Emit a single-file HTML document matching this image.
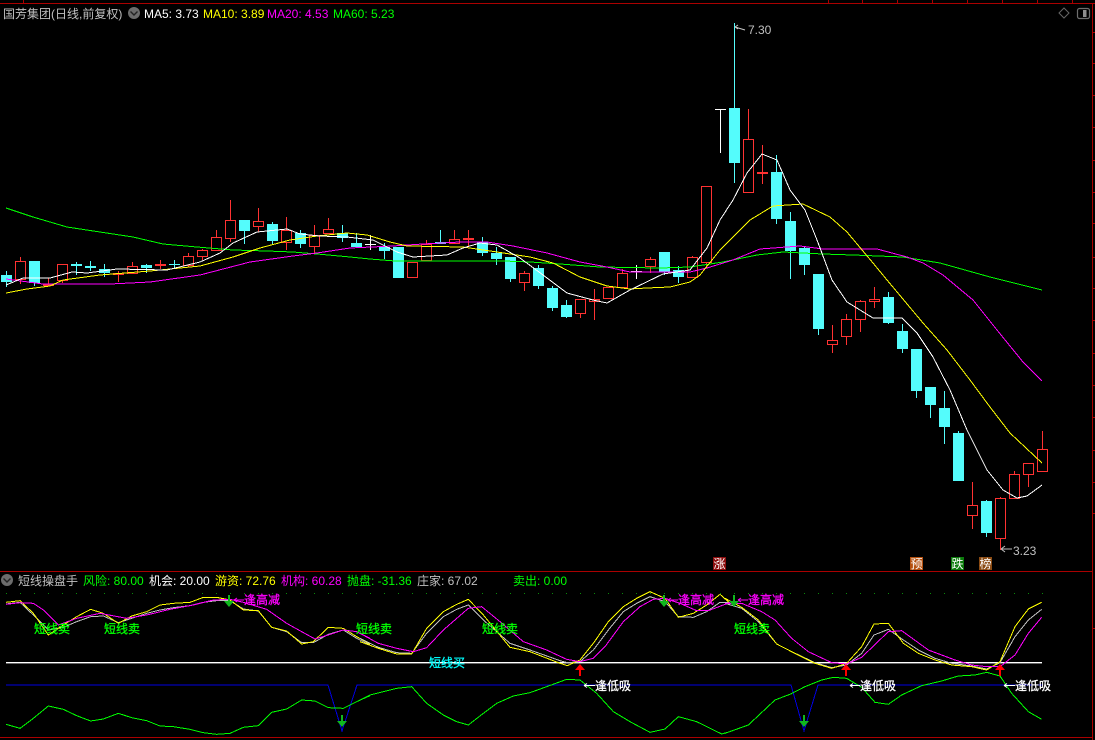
<!DOCTYPE html>
<html lang="zh">
<head>
<meta charset="utf-8">
<title>K线图</title>
<style>
html,body{margin:0;padding:0;background:#000;width:1095px;height:740px;overflow:hidden}
svg{display:block;position:absolute;left:0;top:0}
text{font-family:"Liberation Sans","WenQuanYi Zen Hei","Noto Sans CJK SC",sans-serif;font-size:12px}
.l{fill:none;stroke-width:1;vector-effect:non-scaling-stroke;shape-rendering:crispEdges}
.b{stroke-width:.3}
</style>
</head>
<body>
<svg width="1095" height="740" viewBox="0 0 1095 740" xmlns="http://www.w3.org/2000/svg">
<rect width="1095" height="740" fill="#000"/>
<!-- frame -->
<g shape-rendering="crispEdges" fill="#aa0000">
<rect x="0" y="3" width="1095" height="1"/>
<rect x="1092" y="3" width="1" height="737"/>
<rect x="0" y="571" width="1092" height="1"/>
<rect x="0" y="737" width="1092" height="1"/>
</g>
<g shape-rendering="crispEdges" stroke="#aa0000" stroke-width="1" fill="none">
<path d="M23.5 0V3M828.5 0V3M862.5 0V3M897.5 0V3M932.5 0V3M967.5 0V3M1002.5 0V3M1037.5 0V3M1072.5 0V3"/>
<path d="M1092 32.5h3M1092 63.5h3M1092 95.5h3M1092 127.5h3M1092 160.5h3M1092 192.5h3M1092 223.5h3M1092 257.5h3M1092 288.5h3M1092 320.5h3M1092 353.5h3M1092 385.5h3M1092 417.5h3M1092 450.5h3M1092 482.5h3M1092 513.5h3M1092 628.5h3"/>
</g>
<!-- header -->
<text x="3" y="18" fill="#c0c0c0">国芳集团(日线,前复权)</text>
<circle cx="134" cy="13" r="6" fill="#6c6c6c"/>
<path d="M130.5 11.5l3.5 3.5 3.5-3.5" fill="none" stroke="#222" stroke-width="1.4"/>
<text x="144" y="18" fill="#fff">MA5: 3.73</text>
<text x="203" y="18" fill="#ffff00">MA10: 3.89</text>
<text x="267" y="18" fill="#ff00ff">MA20: 4.53</text>
<text x="333" y="18" fill="#00ff00">MA60: 5.23</text>
<path d="M1064 8l5 5-5 5-5-5z" fill="none" stroke="#666" stroke-width="1"/>
<rect x="1077.5" y="8.5" width="12" height="10" rx="2" fill="none" stroke="#6e6e6e" stroke-width="1.2"/>
<rect x="1083" y="10" width="3.5" height="7" fill="#8e8e8e"/>
<!-- candles: cyan -->
<path class="l" stroke="#54fcfc" d="M6.5 271V287M34.5 261V286M76.5 262V275M90.5 261V271M104.5 264V277M146.5 264V273M174.5 260V268M244.5 220V244M272.5 222V244M300.5 230V248M342.5 225V242M356.5 233V247M384.5 243V259M398.5 247V278M440.5 230V244M482.5 237V256M496.5 247V265M510.5 257V282M538.5 265V289M552.5 286V311M566.5 300V318M664.5 252V275M678.5 266V283M734.5 23V183M776.5 155V224M790.5 212V279M804.5 246V275M818.5 274V335M888.5 292V324M902.5 324V353M916.5 349V398M930.5 387V418M944.5 391V444M958.5 431V481M986.5 500V537"/>
<path fill="#54fcfc" shape-rendering="crispEdges" d="M1 275h11v7h-11zM29 261h11v22h-11zM71 264h11v2h-11zM85 266h11v2h-11zM99 269h11v4h-11zM141 265h11v3h-11zM169 264h11v1h-11zM239 220h11v11h-11zM267 224h11v17h-11zM295 233h11v11h-11zM337 233h11v5h-11zM351 243h11v4h-11zM379 247h11v4h-11zM393 247h11v31h-11zM435 242h11v2h-11zM477 242h11v11h-11zM491 253h11v6h-11zM505 257h11v22h-11zM533 268h11v18h-11zM547 288h11v20h-11zM561 305h11v12h-11zM659 252h11v20h-11zM673 270h11v7h-11zM729 108h11v55h-11zM771 172h11v47h-11zM785 221h11v30h-11zM799 248h11v17h-11zM813 274h11v55h-11zM883 297h11v26h-11zM897 331h11v18h-11zM911 349h11v42h-11zM925 387h11v18h-11zM939 408h11v19h-11zM953 433h11v48h-11zM981 501h11v32h-11z"/>
<!-- candles: red hollow -->
<path class="l" stroke="#ff3232" d="M20.5 257V261M20.5 280V284M62.5 281V283M132.5 262V266M188.5 253V256M188.5 266V267M202.5 249V250M202.5 257V260M216.5 230V237M230.5 200V220M230.5 239V242M258.5 208V221M258.5 227V232M286.5 217V230M286.5 243V250M314.5 225V235M314.5 247V253M328.5 218V229M426.5 240V244M454.5 230V239M524.5 271V273M524.5 283V291M580.5 314V318M622.5 269V273M650.5 257V259M650.5 267V273M692.5 256V257M706.5 263V268M748.5 109V139M832.5 325V340M832.5 345V353M846.5 314V319M846.5 337V345M860.5 300V301M860.5 320V332M874.5 287V299M874.5 302V308M972.5 482V505M972.5 516V529M1000.5 497V498M1000.5 539V550M1014.5 471V474M1028.5 475V487M1042.5 431V449"/>
<path class="l" stroke="#ff3232" d="M15.5 261.5h10V279.5h-10zM57.5 264.5h10V280.5h-10zM127.5 266.5h10V273.5h-10zM183.5 256.5h10V265.5h-10zM197.5 250.5h10V256.5h-10zM211.5 237.5h10V250.5h-10zM225.5 220.5h10V238.5h-10zM253.5 221.5h10V226.5h-10zM281.5 230.5h10V242.5h-10zM309.5 235.5h10V246.5h-10zM323.5 229.5h10V233.5h-10zM407.5 262.5h10V277.5h-10zM421.5 244.5h10V260.5h-10zM449.5 239.5h10V243.5h-10zM519.5 273.5h10V282.5h-10zM575.5 299.5h10V313.5h-10zM589.5 299.5h10V301.5h-10zM603.5 287.5h10V298.5h-10zM617.5 273.5h10V287.5h-10zM645.5 259.5h10V266.5h-10zM687.5 257.5h10V277.5h-10zM701.5 186.5h10V262.5h-10zM743.5 139.5h10V192.5h-10zM827.5 340.5h10V344.5h-10zM841.5 319.5h10V336.5h-10zM855.5 301.5h10V319.5h-10zM869.5 299.5h10V301.5h-10zM967.5 505.5h10V515.5h-10zM995.5 498.5h10V538.5h-10zM1009.5 474.5h10V498.5h-10zM1023.5 463.5h10V474.5h-10zM1037.5 449.5h10V471.5h-10z"/>
<!-- candles: red flat -->
<path class="l" stroke="#ff3232" d="M48.5 278V286M118.5 271V282M160.5 260V269M468.5 230V246M594.5 289V320M762.5 145V184"/>
<path fill="#ff3232" shape-rendering="crispEdges" d="M43 284h11v2h-11zM113 273h11v2h-11zM155 264h11v2h-11zM463 238h11v2h-11zM757 172h11v2h-11z"/>
<!-- candles: white flat -->
<path class="l" stroke="#fff" d="M370.5 235V250M636.5 265V279M720.5 109V153"/>
<path fill="#fff" shape-rendering="crispEdges" d="M365 244h11v1h-11zM631 271h11v1h-11zM715 109h11v1h-11z"/>
<!-- MA lines -->
<polyline class="l" stroke="#00ff00" points="6,208 33,217 67,227 100,232 133,237 163,244 197,247 233,250 267,251 293,252 317,254 350,257 370,259 395,261 433,261 503,261 530,262 560,264 600,267 660,268 690,267 723,262 757,255 783,252 823,254 853,255 903,257 940,263 990,277 1042,290"/>
<polyline class="l" stroke="#ff00ff" points="6,279 43,284 110,284 150,282 200,275 250,262 293,256 317,253 350,248 393,246 423,244 460,242 487,242 513,246 547,253 580,262 607,267 630,272 663,272 690,272 707,268 733,260 760,249 800,246 823,249 877,249 907,257 923,263 943,275 973,300 997,330 1023,362 1042,381"/>
<polyline class="l" stroke="#ffff00" points="6,293 27,289 50,286 63,280 100,275 150,271 200,266 233,257 260,248 290,240 317,236 347,233 367,235 390,242 407,246 463,247 497,252 530,257 553,263 580,277 607,286 630,289 647,288 670,287 690,282 700,275 720,250 750,220 773,206 803,204 830,217 847,232 873,263 887,280 923,323 947,350 970,380 990,407 1010,433 1042,463"/>
<polyline class="l" stroke="#ffffff" points="6,285 23,278 50,278 72,272 87,273 117,269 167,270 200,262 220,253 233,243 257,232 287,229 300,234 320,236 347,237 373,240 397,252 413,257 447,255 463,248 480,243 497,245 520,258 543,275 567,293 593,300 607,303 630,290 663,274 690,270 707,248 720,220 733,200 747,173 762,154 777,160 790,190 805,210 817,240 832,280 847,302 873,318 902,318 917,333 933,357 950,390 967,430 987,470 1003,490 1017,498 1027,496 1042,485"/>
<!-- extreme labels -->
<path d="M735 27l3-2M735 27l3 2M735 27l10 3" fill="none" stroke="#c8c8c8" stroke-width="1"/>
<text x="748" y="34" fill="#c0c0c0">7.30</text>
<path d="M1001 549h11M1001 549l4-3M1001 549l4 3" fill="none" stroke="#c0c0c0" stroke-width="1"/>
<text x="1013" y="555" fill="#c0c0c0">3.23</text>
<!-- small tags -->
<rect x="713" y="557" width="13" height="13" fill="#8c0d0d"/>
<text x="713.5" y="568" fill="#fff">涨</text>
<rect x="910" y="557" width="13" height="13" fill="#b4500f"/>
<text x="910.5" y="568" fill="#fff">预</text>
<rect x="951" y="557" width="13" height="13" fill="#0b7a0b"/>
<text x="951.5" y="568" fill="#fff">跌</text>
<rect x="979" y="557" width="13" height="13" fill="#8a4a12"/>
<text x="979.5" y="568" fill="#fff">榜</text>
<!-- lower header -->
<circle cx="7" cy="580" r="6" fill="#6c6c6c"/>
<path d="M3.5 578.5l3.5 3.5 3.5-3.5" fill="none" stroke="#222" stroke-width="1.4"/>
<text x="18" y="585" fill="#c0c0c0">短线操盘手</text>
<text x="83" y="585" fill="#00ff00">风险: 80.00</text>
<text x="149" y="585" fill="#fff">机会: 20.00</text>
<text x="215" y="585" fill="#ffff00">游资: 72.76</text>
<text x="281" y="585" fill="#ff00ff">机构: 60.28</text>
<text x="347" y="585" fill="#00ff00">抛盘: -31.36</text>
<text x="417" y="585" fill="#c0c0c0">庄家: 67.02</text>
<text x="513" y="585" fill="#00ff00">卖出: 0.00</text>
<!-- dotted row -->
<path d="M6 593.5H1043" stroke="#0a8a0a" stroke-width="1" stroke-dasharray="1 13" fill="none" shape-rendering="crispEdges"/>
<!-- lower panel base lines -->
<rect x="6" y="662" width="1036" height="1.4" fill="#fff"/>
<polyline class="l" stroke="#0000e0" points="6,685 328,685 342,731 357,685 791,685 804,731 818,685 1042,685"/>
<!-- lower panel left part -->
<g transform="translate(0,570) scale(.33333)">
<polyline class="l" stroke="#c0c0c0" points="18,102 60,97 100,135 145,180 190,172 230,155 272,140 310,138 355,158 395,145 440,130 480,120 520,113 570,107 610,97 650,92 690,92 730,117 775,123 815,172 860,185 905,218 940,218 985,193 1030,180 1070,205 1110,225"/>
<polyline class="l" stroke="#ffff00" points="18,97 60,92 100,130 145,195 190,165 230,140 272,118 310,130 355,160 395,138 440,125 480,105 520,100 570,97 610,82 650,82 690,90 730,120 775,122 815,172 860,183 905,222 940,215 985,172 1030,175 1070,200 1110,222"/>
<polyline class="l" stroke="#ff00ff" points="18,103 60,98 100,100 130,120 175,165 230,145 300,130 380,145 440,135 510,118 580,105 640,90 690,88 730,97 800,118 860,160 905,185 945,207 985,195 1030,180 1070,185 1110,205"/>
<polyline class="l" stroke="#00ff00" points="18,463 60,475 100,445 145,408 190,418 230,437 272,453 310,447 355,430 395,443 440,452 480,468 520,470 570,478 610,488 650,493 690,490 730,472 775,467 815,427 860,417 905,390 945,393 985,413 1030,415 1070,395 1110,377"/>
</g>
<!-- lower panel middle part -->
<g transform="translate(360,570) scale(.33333)">
<polyline class="l" stroke="#c0c0c0" points="0,205 55,232 110,248 155,250 200,190 250,140 290,118 325,105 370,150 450,220 510,240 600,272 622,278 660,275 700,240 745,180 790,125 830,100 870,80 915,95 955,140 1000,142 1040,125 1080,97 1110,98"/>
<polyline class="l" stroke="#ffff00" points="0,215 55,235 110,252 155,252 200,175 250,125 290,103 325,88 370,135 450,232 510,245 600,280 622,287 660,270 700,220 745,155 790,110 830,85 870,65 915,85 955,142 1000,130 1040,105 1080,73 1110,100"/>
<polyline class="l" stroke="#ff00ff" points="0,190 55,220 110,235 160,245 200,233 250,180 325,115 365,110 420,155 490,215 560,240 620,268 660,275 700,265 735,230 790,155 840,110 880,88 915,85 960,100 1010,122 1045,122 1090,105 1110,97"/>
<polyline class="l" stroke="#00ff00" points="0,390 30,375 70,365 110,355 155,350 200,400 250,435 290,455 325,465 370,430 410,400 460,378 510,368 560,350 620,328 660,330 710,370 760,425 810,455 870,487 915,477 955,440 1010,455 1085,492 1110,485"/>
</g>
<!-- lower panel right part -->
<g transform="translate(725,570) scale(.33333)">
<polyline class="l" stroke="#c0c0c0" points="0,100 50,115 100,155 155,222 200,245 270,278 320,293 365,285 410,250 447,195 490,178 535,210 580,240 630,265 680,280 740,288 785,297 825,278 870,200 910,150 950,118"/>
<polyline class="l" stroke="#ffff00" points="0,85 50,112 100,150 155,222 200,245 270,280 320,295 365,280 410,230 447,162 490,160 535,220 580,250 630,270 680,285 740,290 785,300 825,275 870,170 910,117 950,97"/>
<polyline class="l" stroke="#ff00ff" points="0,100 50,100 110,125 150,150 200,205 250,245 320,278 365,282 410,262 490,185 530,182 610,240 690,270 740,285 785,290 825,290 870,255 910,190 950,142"/>
<polyline class="l" stroke="#00ff00" points="0,490 70,465 150,390 197,372 240,350 290,330 325,322 365,325 410,352 450,397 490,403 530,375 590,347 650,333 700,318 750,315 785,307 825,318 860,370 910,425 950,448"/>
</g>
<!-- lower labels -->
<g fill="#00ff00" stroke="#00ff00" class="b">
<text x="34" y="633">短线卖</text>
<text x="104" y="633">短线卖</text>
<text x="356" y="633">短线卖</text>
<text x="482" y="633">短线卖</text>
<text x="734" y="633">短线卖</text>
</g>
<text x="429" y="667" fill="#00ffff" stroke="#00ffff" class="b">短线买</text>
<path d="M234 600h10M234 600l3-2M234 600l3 2M668 600h10M668 600l3-2M668 600l3 2M738 600h10M738 600l3-2M738 600l3 2" stroke="#ff00ff" stroke-width="1" fill="none"/>
<g fill="#ff00ff" stroke="#ff00ff" class="b">
<text x="244" y="604">逢高减</text>
<text x="678" y="604">逢高减</text>
<text x="748" y="604">逢高减</text>
</g>
<path d="M584 685.5h11M584 685.5l3-2M584 685.5l3 2M850 685.5h10M850 685.5l3-2M850 685.5l3 2M1004 685.5h11M1004 685.5l3-2M1004 685.5l3 2" stroke="#fff" stroke-width="1" fill="none"/>
<g fill="#fff" stroke="#fff" class="b">
<text x="595" y="690">逢低吸</text>
<text x="860" y="690">逢低吸</text>
<text x="1015" y="690">逢低吸</text>
</g>
<!-- arrows -->
<g fill="#10b81e">
<path d="M228 595h2v6h4l-5 6-5-6h4z"/>
<path d="M663 595h2v6h4l-5 6-5-6h4z"/>
<path d="M733 595h2v6h4l-5 6-5-6h4z"/>
<path d="M341 715h2v6h4l-5 6-5-6h4z"/>
<path d="M803 715h2v6h4l-5 6-5-6h4z"/>
</g>
<g fill="#ff0000">
<path d="M579 676h2v-6h4l-5-6-5 6h4z"/>
<path d="M845 676h2v-6h4l-5-6-5 6h4z"/>
<path d="M999 676h2v-6h4l-5-6-5 6h4z"/>
</g>
</svg>
</body>
</html>
